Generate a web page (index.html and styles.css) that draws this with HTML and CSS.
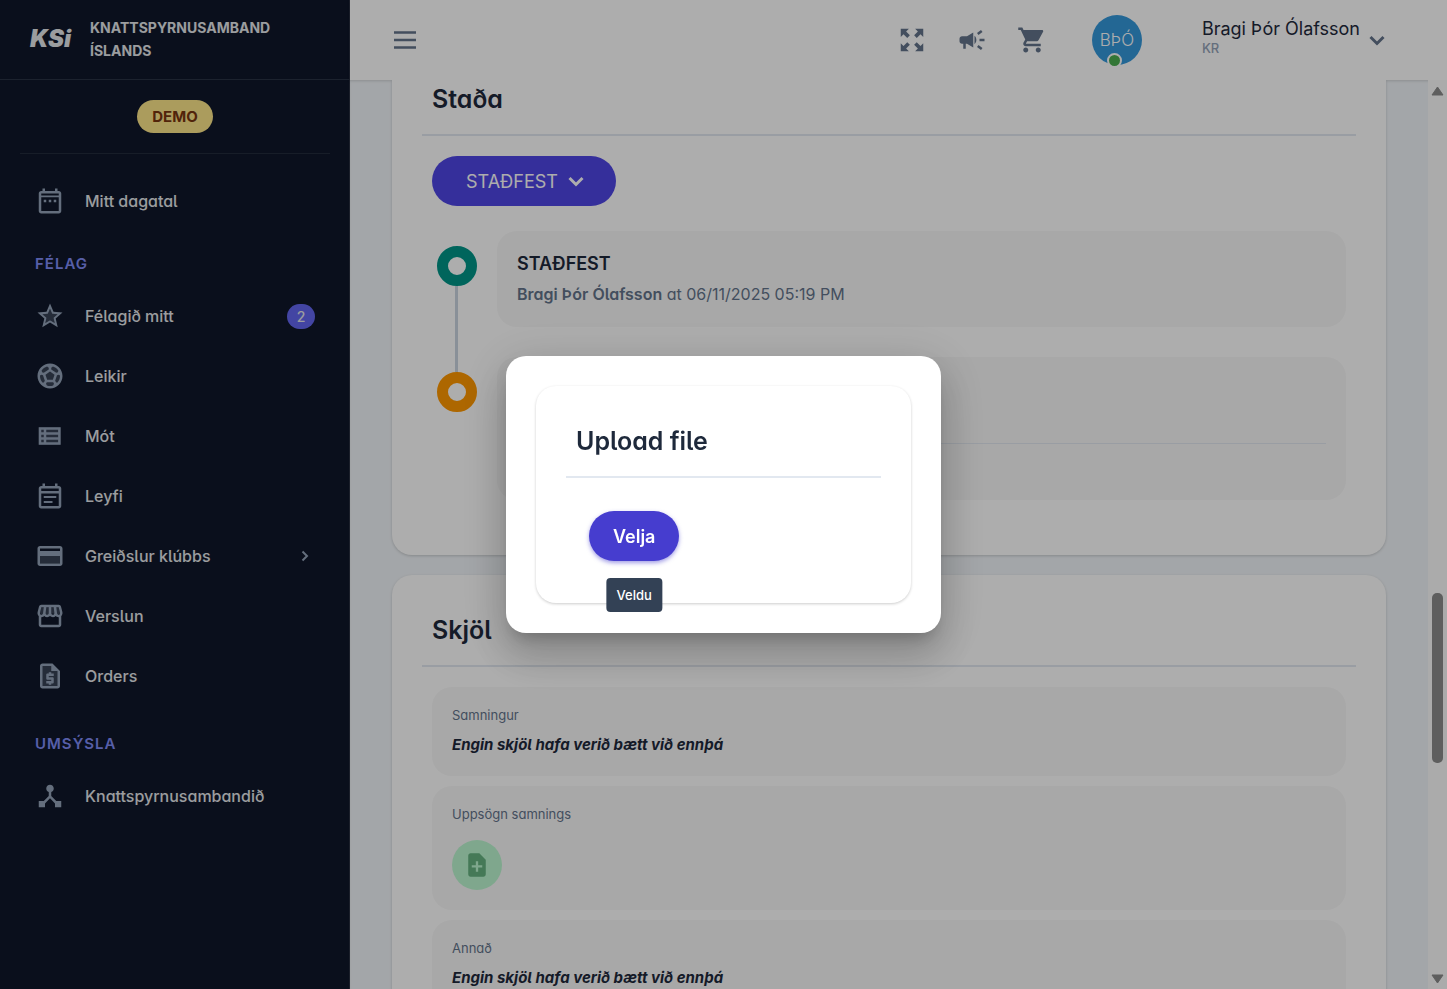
FILE: index.html
```html
<!DOCTYPE html>
<html lang="is">
<head>
<meta charset="utf-8">
<meta name="viewport" content="width=device-width, initial-scale=1">
<title>Knattspyrnusamband Íslands</title>
<link rel="stylesheet" href="styles.css">
</head>
<body>
<div class="app">
  <aside class="sidebar">
    <div class="brand">
      <span class="brand-logo">KSi</span>
      <span class="brand-name">KNATTSPYRNUSAMBAND ÍSLANDS</span>
    </div>
    <div class="env"><span class="env-badge">DEMO</span></div>
    <nav class="nav">
      <a class="nav-item" href="#">
        <svg class="icon" viewBox="0 0 24 24"><path d="M19 4h-1V2h-2v2H8V2H6v2H5c-1.110 0-1.990.9-1.990 2L3 20c0 1.100.89 2 2 2h14c1.100 0 2-.9 2-2V6c0-1.100-.9-2-2-2zm0 16H5V9h14v11zM5 7.500V6h14v1.500zM7 11h2v2H7zm4 0h2v2h-2zm4 0h2v2h-2z"/></svg>
        <span class="nav-text">Mitt dagatal</span>
      </a>
      <h2 class="nav-heading">FÉLAG</h2>
      <a class="nav-item" href="#">
        <svg class="icon" viewBox="0 0 24 24"><path class="tone" d="m12 6.100 1.710 4.040 4.380.38-3.320 2.880 1 4.280L12 15.400l-3.760 2.270 1-4.280-3.320-2.880 4.380-.38z"/><path d="m22 9.240-7.190-.62L12 2 9.190 8.630 2 9.240l5.460 4.730L5.820 21 12 17.270 18.180 21l-1.630-7.030L22 9.240zM12 15.400l-3.760 2.270 1-4.280-3.320-2.880 4.380-.38L12 6.100l1.710 4.040 4.380.38-3.320 2.880 1 4.280L12 15.400z"/></svg>
        <span class="nav-text">Félagið mitt</span>
        <span class="nav-count">2</span>
      </a>
      <a class="nav-item" href="#">
        <svg class="icon" viewBox="0 0 24 24"><circle class="tone" cx="12" cy="12" r="9"/><path d="M12 2C6.480 2 2 6.480 2 12s4.480 10 10 10 10-4.480 10-10S17.520 2 12 2zm1 3.300 1.350-.95c1.820.56 3.370 1.760 4.380 3.340l-.39 1.340-1.350.46L13 6.700V5.300zm-3.350-.95L11 5.300v1.400L7.010 9.490l-1.350-.46-.39-1.340c1.010-1.570 2.560-2.770 4.380-3.340zM7.080 17.110l-1.140.1C4.730 15.810 4 13.990 4 12c0-.12.010-.23.020-.35l1-.73 1.380.48 1.460 4.340-.78 1.370zm7.420 2.480c-.79.26-1.630.41-2.500.41s-1.710-.15-2.500-.41l-.69-1.490.64-1.100h5.110l.64 1.110-.7 1.480zM14.270 15H9.730l-1.350-4.020L12 8.440l3.630 2.540L14.270 15zm3.790 2.210-1.140-.1-.79-1.370 1.460-4.340 1.390-.47 1 .73c.010.11.020.22.020.34 0 1.990-.73 3.810-1.940 5.210z"/></svg>
        <span class="nav-text">Leikir</span>
      </a>
      <a class="nav-item" href="#">
        <svg class="icon" viewBox="0 0 24 24"><path class="tone" d="M3 5h17.500v14H3z"/><path d="M3 5v14h17.500V5zm4 2v2H5V7zm-2 6v-2h2v2zm0 2h2v2H5zm13.500 2H9v-2h9.500zm0-4H9v-2h9.500zm0-4H9V7h9.500z"/></svg>
        <span class="nav-text">Mót</span>
      </a>
      <a class="nav-item" href="#">
        <svg class="icon" viewBox="0 0 24 24"><path d="M19 4h-1V2h-2v2H8V2H6v2H5c-1.110 0-2 .9-2 2v14c0 1.100.89 2 2 2h14c1.100 0 2-.9 2-2V6c0-1.100-.9-2-2-2zm0 16H5V10h14v10zM5 8V6h14v2zm2 4h10v1.600H7zm0 4h7v1.600H7z"/></svg>
        <span class="nav-text">Leyfi</span>
      </a>
      <a class="nav-item" href="#">
        <svg class="icon" viewBox="0 0 24 24"><path class="tone" d="M4 12h16v6H4z"/><path d="M20 4H4c-1.110 0-1.990.89-1.990 2L2 18c0 1.110.89 2 2 2h16c1.110 0 2-.89 2-2V6c0-1.110-.89-2-2-2zm0 14H4v-6h16v6zm0-10H4V6h16v2z"/></svg>
        <span class="nav-text">Greiðslur klúbbs</span>
        <svg class="nav-arrow" viewBox="0 0 20 20"><path d="m7.500 5.500 4.500 4.500-4.500 4.500"/></svg>
      </a>
      <a class="nav-item" href="#">
        <svg class="icon" viewBox="0 0 24 24"><path class="tone" d="M5 5h14l1 5-2 1-4-1-4 1-5-.5-1-1z"/><path d="m21.900 8.890-1.050-4.370c-.22-.9-1-1.520-1.910-1.520H5.050c-.9 0-1.690.63-1.900 1.520L2.100 8.890c-.24 1.020-.02 2.060.62 2.880.08.110.19.190.28.290V19c0 1.100.9 2 2 2h14c1.100 0 2-.9 2-2v-6.940c.09-.09.2-.18.280-.28.640-.82.870-1.870.62-2.890zM13 5h1.960l.54 4.520c.05.390-.07.780-.33 1.070-.22.260-.54.410-.95.410-.67 0-1.220-.59-1.220-1.310V5zM8.490 9.520 9.040 5H11v4.690c0 .72-.55 1.310-1.290 1.310-.34 0-.65-.15-.89-.41-.25-.29-.37-.68-.33-1.070zm-4.450-.16L5.050 5h1.970l-.58 4.860c-.08.650-.6 1.140-1.210 1.140-.49 0-.8-.29-.93-.47-.27-.32-.36-.75-.26-1.170zM5 19v-6.030c.08.010.15.030.23.030.87 0 1.660-.36 2.240-.95.6.6 1.400.95 2.310.95.870 0 1.650-.36 2.230-.93.590.57 1.390.93 2.290.93.840 0 1.640-.35 2.240-.95.580.59 1.370.95 2.240.95.080 0 .15-.02.230-.03V19H5zM18.830 11c-.61 0-1.140-.49-1.210-1.140L17.040 5h1.900l1.030 4.360c.1.420.010.850-.25 1.170-.14.180-.44.470-.89.470z"/></svg>
        <span class="nav-text">Verslun</span>
      </a>
      <a class="nav-item" href="#">
        <svg class="icon" viewBox="0 0 24 24"><path class="tone" d="M5 3h9l5 5v13H5z"/><path d="M14 2H6c-1.100 0-1.990.9-1.990 2L4 20c0 1.100.89 2 1.990 2H18c1.100 0 2-.9 2-2V8l-6-6zM6 20V4h7v4h5v12H6zm5-1h2v-1h1c.55 0 1-.45 1-1v-3c0-.55-.45-1-1-1h-3v-1h4v-2h-2V9h-2v1h-1c-.55 0-1 .45-1 1v3c0 .55.45 1 1 1h3v1H9v2h2v1z"/></svg>
        <span class="nav-text">Orders</span>
      </a>
      <h2 class="nav-heading nav-heading--next">UMSÝSLA</h2>
      <a class="nav-item" href="#">
        <svg class="icon" viewBox="0 0 24 24"><path d="m17 16-4-4V8.820C14.160 8.400 15 7.300 15 6c0-1.660-1.340-3-3-3S9 4.340 9 6c0 1.300.84 2.400 2 2.820V12l-4 4H3v5h5v-3.050l4-4.200 4 4.200V21h5v-5h-4z"/></svg>
        <span class="nav-text">Knattspyrnusambandið</span>
      </a>
    </nav>
  </aside>

  <div class="main">
    <header class="topbar">
      <button class="icon-button" aria-label="Valmynd"><svg class="icon" viewBox="0 0 24 24"><path d="M3.200 5h17.600v2H3.200zm0 6h17.600v2H3.200zm0 6h17.600v2H3.200z"/></svg></button>
      <div class="topbar-actions">
        <button class="icon-button" aria-label="Fylla skjá"><svg class="icon" viewBox="0 0 24 24"><path d="M3 3h6.500L7.300 5.200l3 3-2.100 2.100-3-3L3 9.500zm18 0v6.500l-2.200-2.200-3 3-2.100-2.100 3-3L14.500 3zM3 21v-6.500l2.200 2.200 3-3 2.100 2.100-3 3L9.500 21zm18 0h-6.500l2.200-2.200-3-3 2.100-2.100 3 3 2.200-2.200z"/></svg></button>
        <button class="icon-button" aria-label="Tilkynningar"><svg class="icon" viewBox="0 0 24 24"><path d="M18 11v2h4v-2h-4zm-2 6.610c.96.710 2.210 1.650 3.200 2.390.4-.53.8-1.070 1.200-1.600-.99-.74-2.240-1.680-3.200-2.400-.4.540-.8 1.080-1.200 1.610zM20.400 5.600c-.4-.53-.8-1.070-1.200-1.600-.99.740-2.240 1.680-3.200 2.400.4.530.8 1.070 1.200 1.600.96-.72 2.210-1.650 3.200-2.400zM4 9c-1.100 0-2 .9-2 2v2c0 1.100.9 2 2 2h1v4h2v-4h1l5 3V6L8 9H4zm11.500 3c0-1.330-.58-2.530-1.500-3.350v6.690c.92-.81 1.500-2.010 1.500-3.340z"/></svg></button>
        <button class="icon-button" aria-label="Karfa"><svg class="icon" viewBox="0 0 24 24"><path d="M7 18c-1.100 0-1.990.9-1.990 2S5.900 22 7 22s2-.9 2-2-.9-2-2-2zM1 2v2h2l3.600 7.590-1.350 2.450c-.16.280-.25.610-.25.960 0 1.100.9 2 2 2h12v-2H7.420c-.14 0-.25-.11-.25-.25l.03-.12.9-1.630h7.450c.75 0 1.410-.41 1.750-1.030l3.580-6.490c.08-.14.120-.31.120-.48 0-.55-.45-1-1-1H5.210l-.94-2H1zm16 16c-1.100 0-1.990.9-1.990 2s.89 2 1.990 2 2-.9 2-2-.9-2-2-2z"/></svg></button>
      </div>
      <button class="user">
        <span class="avatar">BÞÓ<span class="avatar-status"></span></span>
        <span class="user-info">
          <span class="user-name">Bragi Þór Ólafsson</span>
          <span class="user-club">KR</span>
        </span>
        <svg class="chevron" viewBox="0 0 20 20"><path d="m3.500 7 6.500 6.500L16.500 7"/></svg>
      </button>
    </header>

    <div class="viewport">
      <main class="content">
        <section class="card card--top">
          <h1 class="card-title">Staða</h1>
          <div class="card-body">
            <button class="status-button">STAÐFEST
              <svg class="chevron" viewBox="0 0 20 20"><path d="m3.500 7 6.500 6.500L16.500 7"/></svg>
            </button>
            <ol class="timeline">
              <li class="timeline-item">
                <span class="timeline-dot"></span>
                <div class="panel">
                  <h3 class="panel-title">STAÐFEST</h3>
                  <p class="panel-meta"><b>Bragi Þór Ólafsson</b> at 06/11/2025 05:19 PM</p>
                </div>
              </li>
              <li class="timeline-item">
                <span class="timeline-dot timeline-dot--pending"></span>
                <div class="panel">
                  <div class="panel-section"></div>
                  <div class="panel-footer"></div>
                </div>
              </li>
            </ol>
          </div>
        </section>

        <section class="card">
          <h1 class="card-title">Skjöl</h1>
          <div class="card-body card-body--list">
            <div class="panel">
              <h3 class="doc-label">Samningur</h3>
              <p class="doc-empty">Engin skjöl hafa verið bætt við ennþá</p>
            </div>
            <div class="panel">
              <h3 class="doc-label">Uppsögn samnings</h3>
              <button class="add-button" aria-label="Bæta við skjali"><svg class="icon" viewBox="0 0 24 24"><path d="M14 2H6.500C5.400 2 4.500 2.900 4.500 4v16c0 1.100.9 2 2 2h11c1.100 0 2-.9 2-2V7.500zm2.500 12.200h-3.500v3.500h-2v-3.500H7.500v-2H11V8.700h2v3.500h3.500z"/></svg></button>
            </div>
            <div class="panel">
              <h3 class="doc-label">Annað</h3>
              <p class="doc-empty">Engin skjöl hafa verið bætt við ennþá</p>
            </div>
          </div>
        </section>
      </main>
      <div class="scrollbar">
        <svg class="scroll-arrow" viewBox="0 0 13 10"><path d="M6.500 1 12 9H1z"/></svg>
        <div class="scroll-track"><div class="scroll-thumb"></div></div>
        <svg class="scroll-arrow" viewBox="0 0 13 10"><path d="M6.500 9 1 1h11z"/></svg>
      </div>
    </div>
  </div>
</div>

<div class="backdrop">
  <div class="dialog" role="dialog" aria-labelledby="dialog-title">
    <div class="dialog-card">
      <h2 class="card-title" id="dialog-title">Upload file</h2>
      <div class="dialog-actions">
        <button class="choose-button">Velja<span class="tooltip">Veldu</span></button>
      </div>
    </div>
  </div>
</div>
</body>
</html>
```
FILE: styles.css
```css
* { box-sizing: border-box; }
h1, h2, h3, p, ol { margin: 0; padding: 0; }
body {
  margin: 0;
  font-family: Inter, "Liberation Sans", sans-serif;
  font-size: 16px;
  color: #1e293b;
  font-feature-settings: "cv05", "cv11";
}
button {
  font-family: inherit;
  border: 0;
  padding: 0;
  background: none;
  color: inherit;
  font-feature-settings: normal;
}
.icon { width: 30px; height: 30px; flex: none; fill: currentColor; display: block; }
.icon .tone { opacity: .3; }
.chevron { width: 20px; height: 20px; fill: none; stroke: currentColor; stroke-width: 3; flex: none; }

.app { display: flex; height: 100vh; overflow: hidden; }

.sidebar { width: 350px; flex: none; background: #0f172a; color: #e5e7ea; box-shadow: inset -1px 0 #2a3040; }
.brand {
  display: flex; align-items: center; gap: 20px;
  height: 80px; padding: 0 30px 2px;
  border-bottom: 1px solid #2a3344;
  font-feature-settings: normal;
}
.brand-logo { width: 40px; font-size: 24px; font-weight: 900; font-style: italic; }
.brand-name { flex: 1; max-width: 200px; font-size: 14px; line-height: 23px; font-weight: 700; }
.env { margin: 0 20px; padding: 20px 0; display: flex; justify-content: center; border-bottom: 1px solid #232b3c; }
.env-badge {
  padding: 0 15px; border-radius: 17px; background: #fde68a; color: #78350f;
  font-size: 15px; line-height: 33px; font-weight: 700; font-feature-settings: normal;
}
.nav { padding: 17px 35px; }
.nav-item {
  display: flex; align-items: center; gap: 20px; height: 60px;
  color: inherit; text-decoration: none; font-size: 16px; font-weight: 500;
}
.nav-item .icon { color: #94a3b8; }
.nav-text { flex: 1; }
.nav-heading { height: 55px; padding-top: 20px; font-size: 15px; line-height: 25px; font-weight: 600; letter-spacing: 1px; color: #818cf8; }
.nav-heading--next { height: 60px; padding-top: 25px; }
.nav-count { min-width: 28px; border-radius: 13px; background: #6366f1; text-align: center; font-size: 14px; line-height: 25px; }
.nav-arrow { width: 20px; height: 20px; fill: none; stroke: #94a3b8; stroke-width: 2; }

.main { flex: 1; min-width: 0; display: flex; flex-direction: column; }
.topbar {
  display: flex; align-items: center; height: 80px; flex: none; padding: 0 60px 0 40px;
  background: #fff; color: #64748b; box-shadow: 0 1px 3px rgba(0, 0, 0, .2);
}
.topbar-actions { display: flex; gap: 30px; margin-left: auto; }
.user { display: flex; align-items: center; margin-left: 45px; text-align: left; }
.avatar {
  position: relative; width: 50px; height: 50px; border-radius: 50%; background: #3498db; color: #fff;
  font-size: 17px; font-weight: 300; line-height: 50px; text-align: center;
}
.avatar-status { position: absolute; left: 15px; bottom: -3px; width: 15px; height: 15px; border: 2px solid #fff; border-radius: 50%; background: #4caf50; }
.user-info { display: flex; flex-direction: column; margin: 0 7px 0 60px; padding-bottom: 4px; }
.user-name { font-size: 18px; line-height: 20px; color: #1e293b; }
.user-club { font-size: 13px; line-height: 18px; color: #94a3b8; font-weight: 500; }

.viewport { flex: 1; min-height: 0; display: flex; background: #f1f5f9; box-shadow: inset 0 2px 3px -1px rgba(0, 0, 0, .15); }
.content { flex: 1; min-width: 0; overflow: hidden; padding: 0 42px; display: flex; flex-direction: column; gap: 20px; }
.card { flex: none; padding: 30px; border-radius: 20px; background: #fff; box-shadow: 0 1px 3px rgba(0, 0, 0, .18); }
.card--top { padding: 0 30px 55px; border-radius: 0 0 20px 20px; }
.card-title { padding: 10px 10px 20px; border-bottom: 2px solid #e2e8f0; font-size: 25px; line-height: 30px; font-weight: 600; }
.card--top .card-title { padding-top: 4px; }
.card-body { padding: 20px 10px 0; }
.card-body--list { display: flex; flex-direction: column; gap: 10px; }
.status-button {
  display: flex; align-items: center; gap: 8px; height: 50px; padding: 0 30px 0 34px;
  border-radius: 25px; background: #4f46e5; color: #fff; font-size: 18px;
}
.panel { flex: 1; min-width: 0; padding: 20px; border-radius: 20px; background: #f8f8f8; }
.timeline { list-style: none; margin-top: 25px; display: flex; flex-direction: column; gap: 30px; }
.timeline-item { display: flex; gap: 20px; padding-left: 5px; }
.timeline-dot { position: relative; flex: none; width: 40px; height: 40px; margin-top: 15px; border: 11px solid #009688; border-radius: 50%; }
.timeline-dot--pending { border-color: #ff9800; }
.timeline-item:first-child .timeline-dot::after {
  content: ""; position: absolute; left: 7px; top: 29px; width: 3px; height: 86px; background: #cbd5e1;
}
.panel-title { font-size: 18px; line-height: 25px; font-weight: 600; }
.panel-meta { margin-top: 6px; font-size: 16px; line-height: 25px; color: #64748b; }
.panel-meta b { font-weight: 600; }
.panel-section { height: 67px; border-bottom: 1px solid #e2e8f0; }
.panel-footer { height: 36px; }
.doc-label { font-size: 13px; line-height: 17px; font-weight: 400; color: #64748b; }
.doc-empty { margin-top: 9px; font-size: 15px; line-height: 23px; font-weight: 700; font-style: italic; }
.add-button { display: grid; place-items: center; width: 50px; height: 50px; margin-top: 17px; border-radius: 50%; background: #bbf7d0; color: #66b380; }
.add-button .icon { width: 28px; height: 28px; }

.scrollbar { width: 19px; padding: 6px 4px 5px 3px; background: #fcfcfc; display: flex; flex-direction: column; align-items: center; }
.scroll-arrow { width: 13px; height: 10px; fill: #8b8b8b; stroke: #8b8b8b; stroke-linejoin: round; }
.scroll-track { flex: 1; width: 11px; display: grid; grid-template-rows: 497fr 170fr 211fr; }
.scroll-thumb { grid-row: 2; border-radius: 5px; background: #8b8b8b; }

.backdrop { position: fixed; inset: 0; display: flex; align-items: center; justify-content: center; background: rgba(0, 0, 0, .32); }
.dialog {
  width: 435px; max-width: 80vw; padding: 30px; border-radius: 20px; background: #fff;
  box-shadow: 0 11px 15px -7px rgba(0, 0, 0, .2), 0 24px 38px 3px rgba(0, 0, 0, .14), 0 9px 46px 8px rgba(0, 0, 0, .12);
}
.dialog-card { padding: 30px; border-radius: 20px; box-shadow: 0 1px 3px rgba(0, 0, 0, .2); }
.dialog-actions { padding: 33px 23px 12px; }
.choose-button {
  position: relative; display: block; height: 50px; padding: 0 24px; border-radius: 25px;
  background: #463dcf; color: #fff; font-size: 18px; font-weight: 600;
  box-shadow: 0 2px 4px rgba(70, 61, 207, .5);
}
.tooltip {
  position: absolute; left: 50%; top: 67px; transform: translateX(-50%);
  padding: 0 10px; border-radius: 4px; background: #334155; color: #fff;
  font-size: 13px; line-height: 34px; font-weight: 500;
}
```
